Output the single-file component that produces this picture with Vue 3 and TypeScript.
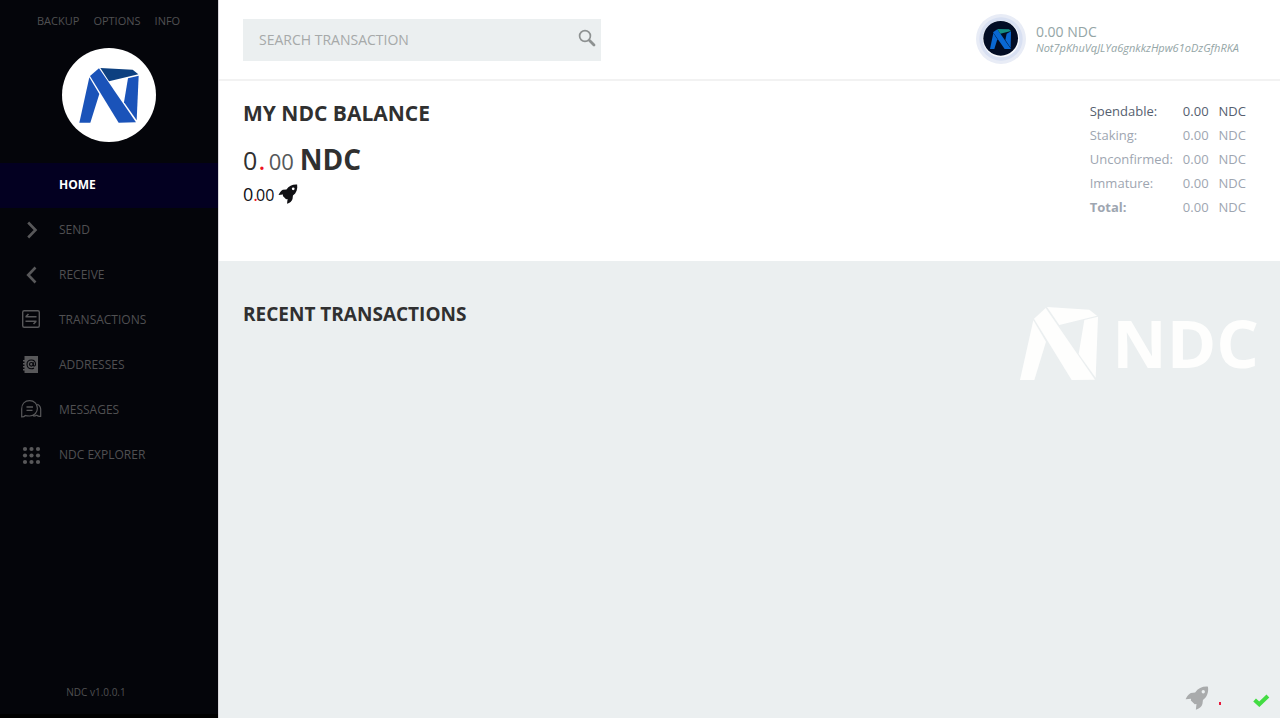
<script setup lang="ts">
import { ref } from 'vue'

interface MenuItem {
  label: string
  icon: string
}

interface BalanceRow {
  label: string
  amount: string
  kind: string
}

const active = ref('HOME')
const query = ref('')

const links: string[] = ['BACKUP', 'OPTIONS', 'INFO']

const menu: MenuItem[] = [
  { label: 'HOME', icon: 'none' },
  { label: 'SEND', icon: 'send' },
  { label: 'RECEIVE', icon: 'receive' },
  { label: 'TRANSACTIONS', icon: 'transactions' },
  { label: 'ADDRESSES', icon: 'addresses' },
  { label: 'MESSAGES', icon: 'messages' },
  { label: 'NDC EXPLORER', icon: 'grid' },
]

const balances: BalanceRow[] = [
  { label: 'Spendable:', amount: '0.00', kind: 'spendable' },
  { label: 'Staking:', amount: '0.00', kind: '' },
  { label: 'Unconfirmed:', amount: '0.00', kind: '' },
  { label: 'Immature:', amount: '0.00', kind: '' },
  { label: 'Total:', amount: '0.00', kind: 'total' },
]

const dots: number[] = [5, 11.5, 18]

const rocket =
  'M22 .6C17 .2 12.600 2 9.700 6.200L5.600 6.600C3.700 7.400 2 9.600 .6 12.600L5.800 12.200L5.600 13.800L9.300 17.500L11 17.200L10.400 22.800C13.600 21.800 16 19.900 16.700 17.300L17.200 13.300C21.200 10.400 22.800 6 22 .6ZM17.500 3.900A1.600 1.600 0 1 1 17.500 7.100A1.600 1.600 0 1 1 17.500 3.900Z'
</script>

<template>
  <div class="wallet">
    <aside class="sidebar">
      <nav class="links" aria-label="Tools">
        <a v-for="link in links" :key="link" href="#">{{ link }}</a>
      </nav>

      <svg class="brand" viewBox="0 0 282 282" aria-hidden="true">
        <circle cx="141" cy="141" r="141" fill="#fff" />
        <g fill="#1a53b9">
          <path d="M82 88L52 224H85L112 138Z" />
          <path d="M84 84L111 61L222 223L170 224Z" />
          <path d="M198 91L230 83L224 217L186 163Z" />
        </g>
        <path d="M115 60L212 65L229 79L141 100Z" fill="#0d4080" />
      </svg>

      <nav class="menu" aria-label="Main">
        <a
          v-for="item in menu"
          :key="item.label"
          href="#"
          :class="{ active: item.label === active }"
          @click.prevent="active = item.label"
        >
          <svg class="icon" viewBox="0 0 22 22" fill="none" stroke="currentColor" aria-hidden="true">
            <path v-if="item.icon === 'send'" d="M8.200 3.500L15.500 11L8.200 18.500" stroke-width="2.600" />
            <path v-else-if="item.icon === 'receive'" d="M15.500 3.500L8.200 11L15.500 18.500" stroke-width="2.600" />
            <template v-else-if="item.icon === 'transactions'">
              <rect x="2.700" y="1.700" width="16.600" height="16.600" rx="1.500" stroke-width="1.400" />
              <path d="M5.500 7.800H16.500M8.500 5L5.800 7.800M5.500 12.200H16.500M13.500 15L16.200 12.200" stroke-width="1.600" />
            </template>
            <template v-else-if="item.icon === 'addresses'">
              <path d="M4.500 2H18V19H4.500V16.500H3V15H4.500V13.500H3V12H4.500V10.500H3V9H4.500V7.500H3V6H4.500Z" fill="currentColor" stroke="none" />
              <g class="cutout" stroke-width="1.100">
                <circle cx="11.300" cy="10.300" r="1.800" />
                <path d="M13.300 8.200V11.200C13.600 12.600 15.500 12 15.500 10.200C15.500 7.600 13.600 6 11.300 6C8.800 6 7 7.900 7 10.300C7 12.900 8.900 14.800 11.400 14.800C12.400 14.800 13.300 14.500 14 14" />
              </g>
            </template>
            <template v-else-if="item.icon === 'messages'">
              <path d="M1.700 18V10C1.700 4.700 4.900 1.700 9.600 1.700C14.300 1.700 17.400 5 17.400 9.300C17.400 13.600 14.300 17 9.600 17C7.700 17 6.500 17 5.400 16.500C4.500 17.600 3.200 18 1.700 18ZM17.300 5.300C19.600 6.400 20.700 8.200 20.700 10.500V17.300C18.800 17.500 17.600 17 16.800 16.300C15.500 17.100 14.500 17.200 13.300 17.200" stroke-width="1.200" />
              <path d="M6.500 8H13M6.500 11.400H12.500" stroke-width="1.400" />
            </template>
            <g v-else-if="item.icon === 'grid'" fill="currentColor" stroke="none">
              <template v-for="y in dots" :key="y">
                <circle v-for="x in dots" :key="x" :cx="x" :cy="y" r="2.100" />
              </template>
            </g>
          </svg>
          <span>{{ item.label }}</span>
        </a>
      </nav>

      <p class="version">NDC v1.0.0.1</p>
    </aside>

    <main class="content">
      <header class="topbar">
        <form class="search" role="search" @submit.prevent>
          <input v-model="query" type="text" placeholder="SEARCH TRANSACTION" aria-label="Search transaction" />
          <button type="submit" aria-label="Search">
            <svg viewBox="0 0 18 18" fill="none" stroke="#8d9191" aria-hidden="true">
              <circle cx="7" cy="7" r="5.400" stroke-width="1.700" />
              <path d="M10.800 10.800L12 12" stroke-width="2" />
              <path d="M11.800 11.800L16 16" stroke-width="2.800" stroke-linecap="round" />
            </svg>
          </button>
        </form>

        <div class="account">
          <svg class="avatar" viewBox="0 0 150 150" aria-hidden="true">
            <circle cx="75" cy="75" r="75" fill="#e8ecf6" />
            <circle cx="75" cy="75" r="65" fill="#d8e0f2" />
            <circle cx="75" cy="75" r="55" fill="#f7f9fd" />
            <circle cx="74" cy="73" r="52" fill="#020d25" />
            <g fill="#0968d3">
              <path d="M52 57L42 105H55L64 76Z" />
              <path d="M51 55L64 46L105 105H86Z" />
              <path d="M92 59L105 52L104 102L88 78Z" />
            </g>
            <path d="M64 45L99 46L105 51L73 59Z" fill="#159085" />
          </svg>
          <div class="account-text">
            <span class="account-balance">0.00 NDC</span>
            <span class="address">Not7pKhuVqJLYa6gnkkzHpw61oDzGfhRKA</span>
          </div>
        </div>
      </header>

      <section class="balance">
        <div>
          <h1>MY NDC BALANCE</h1>
          <p class="amount"><span class="whole">0</span><span class="point">.</span><span class="cents">00</span><strong>NDC</strong></p>
          <p class="stake">
            <span>0</span><span class="point">.</span><span class="cents">00</span>
            <svg viewBox="0 0 23 23" aria-hidden="true"><path :d="rocket" fill="#101014" fill-rule="evenodd" /></svg>
          </p>
        </div>

        <table>
          <tbody>
            <tr v-for="row in balances" :key="row.label" :class="row.kind">
              <th scope="row">{{ row.label }}</th>
              <td>{{ row.amount }}</td>
              <td>NDC</td>
            </tr>
          </tbody>
        </table>
      </section>

      <section class="recent">
        <h2>RECENT TRANSACTIONS</h2>
        <div class="watermark">
          <svg viewBox="0 0 234 219" fill="#fefefd" aria-hidden="true">
            <path d="M40 40L0 219H43L78 104Z" />
            <path d="M42 35L77 3L225 218L155 219Z" />
            <path d="M81 0L208 8L231 26L118 54Z" />
            <path d="M193 39L234 29L227 212L176 141Z" />
          </svg>
          <span>NDC</span>
        </div>
      </section>

      <footer class="status">
        <svg class="status-rocket" viewBox="0 0 23 23" aria-hidden="true"><path :d="rocket" fill="#a9abac" fill-rule="evenodd" /></svg>
        <span class="status-dot"></span>
        <svg class="status-check" viewBox="0 0 17 13" aria-hidden="true">
          <path d="M1.600 6L6.300 10.300L14.900 2" fill="none" stroke="#43dc43" stroke-width="4" />
        </svg>
      </footer>
    </main>
  </div>
</template>

<style>
body {
  margin: 0;
}
</style>

<style scoped>
.wallet {
  display: flex;
  min-height: 100vh;
  font-family: "Open Sans", "Noto Sans", sans-serif;
  color: #303030;
  background: #ebeff0;
}

.wallet * {
  box-sizing: border-box;
}

p,
h1,
h2 {
  margin: 0;
}

a {
  color: inherit;
  text-decoration: none;
}

.sidebar {
  display: flex;
  flex: 0 0 219px;
  flex-direction: column;
  color: #505052;
  background: #04050a;
  border-right: 1px solid #d9d7dc;
  box-shadow: inset 0 -4px #000;
}

.links {
  display: flex;
  gap: 14px;
  padding: 13px 0 0 37px;
  font-size: 11px;
  line-height: 16px;
}

.brand {
  width: 94px;
  height: 94px;
  margin: 19px 0 21px 62px;
}

.menu a {
  display: flex;
  align-items: center;
  gap: 17px;
  height: 45px;
  padding: 0 0 1px 20px;
  font-size: 12px;
  line-height: 16px;
}

.menu a.active {
  font-weight: 700;
  color: #fff;
  background: #030021;
}

.icon {
  width: 22px;
  height: 22px;
  color: #58585a;
}

.cutout {
  stroke: #04050a;
}

.version {
  margin-top: auto;
  padding: 0 26px 18px 0;
  font-size: 10px;
  line-height: 16px;
  text-align: center;
}

.content {
  display: flex;
  flex: 1;
  flex-direction: column;
  min-width: 0;
}

.topbar {
  display: flex;
  align-items: center;
  justify-content: space-between;
  min-height: 81px;
  padding: 14px 41px 13px 24px;
  background: #fff;
  border-bottom: 2px solid #f2f2f2;
}

.search {
  display: flex;
  width: 358px;
  height: 42px;
  background: #ebeff0;
}

.search input {
  flex: 1;
  min-width: 0;
  padding: 0 0 0 16px;
  font: 400 14px/20px "Open Sans", sans-serif;
  color: #303030;
  background: none;
  border: 0;
}

.search input::placeholder {
  color: #a6a9a9;
  opacity: 1;
}

.search button {
  display: flex;
  padding: 10px 5px 0;
  background: none;
  border: 0;
}

.search svg {
  width: 18px;
  height: 18px;
}

.account {
  display: flex;
  align-items: flex-start;
  align-self: stretch;
  gap: 10px;
}

.avatar {
  width: 50px;
  height: 50px;
}

.account-text {
  display: flex;
  flex-direction: column;
  padding-top: 10px;
  color: #94a5a6;
}

.account-balance {
  font-size: 14px;
  line-height: 16px;
}

.address {
  font-size: 11px;
  font-style: italic;
  line-height: 16px;
}

.balance {
  display: flex;
  align-items: flex-start;
  justify-content: space-between;
  min-height: 180px;
  padding: 18px 34px 0 24px;
  background: #fff;
}

h1 {
  font-size: 21px;
  line-height: 28px;
}

.point {
  color: #ee1122;
}

.amount {
  display: flex;
  align-items: baseline;
  margin-top: 12px;
  font-size: 25px;
  line-height: 40px;
}

.amount .point {
  margin-left: 1px;
  font-size: 28px;
}

.amount .cents {
  margin: 0 6px 0 3px;
  font-size: 22px;
  color: #55585a;
}

.amount strong {
  font-size: 28px;
}

.stake {
  display: flex;
  align-items: baseline;
  font-size: 18px;
  line-height: 26px;
  color: #101014;
}

.stake .point {
  margin-right: -2px;
}

.stake .cents {
  font-size: 16px;
}

.stake svg {
  align-self: center;
  width: 20px;
  height: 20px;
  margin: 0 0 2px 4px;
}

table {
  margin-right: -5px;
  font-size: 13px;
  line-height: 24px;
  color: #9ea6b1;
  border-collapse: collapse;
}

th {
  padding: 0 5px;
  font-weight: 400;
  text-align: left;
}

td {
  padding: 0 5px;
}

.spendable {
  color: #55606f;
}

.total th {
  font-weight: 700;
}

.recent {
  display: flex;
  align-items: flex-start;
  justify-content: space-between;
  padding: 39px 21px 0 24px;
}

h2 {
  font-size: 19px;
  line-height: 28px;
}

.watermark {
  display: flex;
  align-items: flex-start;
  gap: 14px;
  padding-top: 7px;
  color: #fefefd;
}

.watermark svg {
  width: 78px;
  height: 73px;
}

.watermark span {
  font-size: 67px;
  font-weight: 700;
  line-height: 70px;
}

.status {
  display: flex;
  align-items: center;
  justify-content: flex-end;
  margin-top: auto;
  padding: 0 10px 8px;
}

.status-rocket {
  width: 24px;
  height: 24px;
}

.status-dot {
  align-self: flex-end;
  width: 2px;
  height: 3px;
  margin: 0 32px 5px 10px;
  background: #e8193c;
}

.status-check {
  width: 17px;
  height: 13px;
  margin-top: 4px;
}
</style>
